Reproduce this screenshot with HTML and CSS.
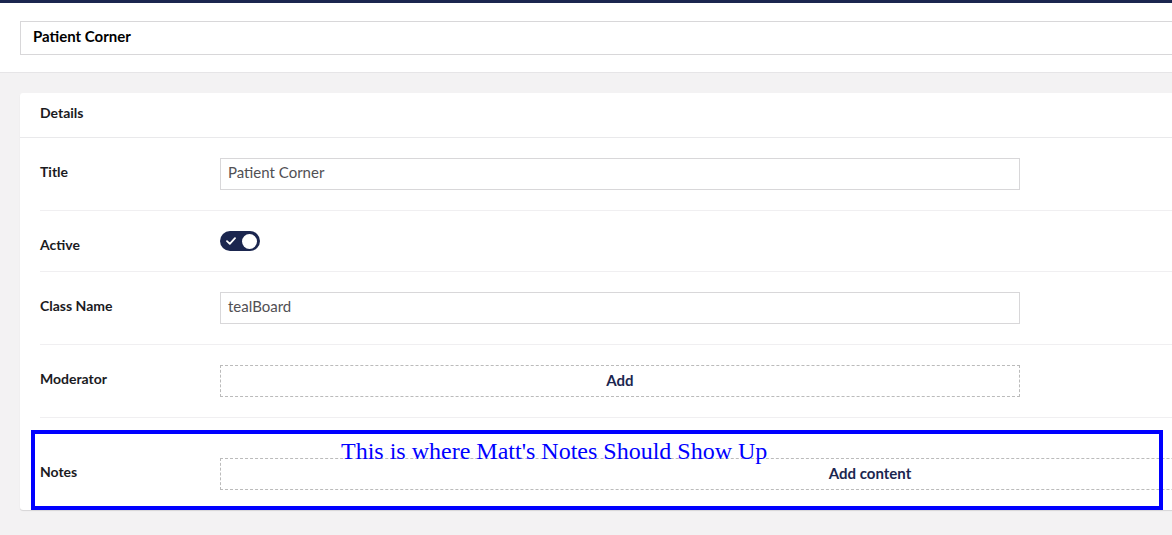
FILE: index.html
```html
<!DOCTYPE html>
<html>
<head>
<meta charset="utf-8">
<link rel="stylesheet" href="styles.css">
</head>
<body>
<div class="topbar"></div>
<div class="header">
  <div class="name-field">Patient Corner</div>
</div>
<div class="main">
  <div class="card">
    <div class="card-head">Details</div>
    <div class="row">
      <div class="label">Title</div>
      <div class="control"><div class="input">Patient Corner</div></div>
    </div>
    <div class="row">
      <div class="label">Active</div>
      <div class="control">
        <div class="toggle">
          <svg class="check" width="10" height="8" viewBox="0 0 10 8"><path d="M1 4.2 L3.8 6.8 L9 1.2" fill="none" stroke="#fff" stroke-width="1.8" stroke-linecap="round" stroke-linejoin="round"/></svg>
          <span class="knob"></span>
        </div>
      </div>
    </div>
    <div class="row">
      <div class="label">Class Name</div>
      <div class="control"><div class="input">tealBoard</div></div>
    </div>
    <div class="row">
      <div class="label">Moderator</div>
      <div class="control"><div class="dashed add">Add</div></div>
    </div>
    <div class="row notes-row">
      <div class="label">Notes</div>
      <div class="control"><div class="dashed add-content">Add content</div></div>
      <div class="highlight">
        <span class="highlight-text">This is where Matt's Notes Should Show Up</span>
      </div>
    </div>
  </div>
</div>
</body>
</html>
```

FILE: styles.css
```css
html, body {
  margin: 0;
  padding: 0;
  overflow: hidden;
  height: 535px;
}
body {
  font-family: Lato, "Open Sans", sans-serif;
  color: #1b1b1f;
  background: #f3f2f3;
}
.topbar {
  height: 3px;
  background: #1b264f;
}
.header {
  background: #fff;
  height: 70px;
  box-sizing: border-box;
  padding: 18px 0 0 20px;
  border-bottom: 1px solid #e6e5e7;
}
.name-field {
  width: 1300px;
  height: 34px;
  box-sizing: border-box;
  border: 1px solid #d8d7d9;
  padding-left: 12px;
  font-size: 15px;
  font-weight: 700;
  line-height: 29px;
  color: #000;
}
.main {
  padding: 20px;
}
.card {
  width: 1300px;
  background: #fff;
  border-radius: 3px;
  box-shadow: 0 1px 1px rgba(0,0,0,0.12);
}
.card-head {
  height: 45px;
  box-sizing: border-box;
  border-bottom: 1px solid #e9e9eb;
  padding-left: 20px;
  font-size: 14px;
  font-weight: 700;
  line-height: 40px;
}
.row {
  margin: 0 20px;
  padding: 20px 0;
  display: flex;
  align-items: flex-start;
  border-bottom: 1px solid #f0eff1;
}
.notes-row {
  position: relative;
  padding-top: 40px;
  border-bottom: none;
}
.label {
  width: 180px;
  flex: none;
  font-size: 14px;
  font-weight: 700;
  line-height: 20px;
  margin-top: 4px;
  margin-bottom: -4px;
}
.control {
  flex: 1;
}
.input {
  width: 800px;
  height: 32px;
  box-sizing: border-box;
  border: 1px solid #d8d7d9;
  padding-left: 7px;
  font-size: 15px;
  line-height: 27px;
  color: #515054;
}
.toggle {
  width: 40px;
  height: 20px;
  border-radius: 10px;
  background: #1b264f;
  display: flex;
  align-items: center;
  justify-content: space-between;
  box-sizing: border-box;
  padding: 0 3px 0 6px;
}
.check {
  display: block;
}
.knob {
  width: 15px;
  height: 15px;
  border-radius: 50%;
  background: #fff;
}
.dashed {
  height: 32px;
  box-sizing: border-box;
  border: 1px dashed #bbbbbb;
  text-align: center;
  font-size: 15px;
  font-weight: 700;
  line-height: 28px;
  color: #1b264f;
}
.add {
  width: 800px;
}
.add-content {
  width: 1300px;
}
.highlight {
  position: absolute;
  left: -9px;
  top: 12px;
  width: 1132px;
  height: 80px;
  box-sizing: border-box;
  border: 4px solid #0000ff;
}
.highlight-text {
  position: absolute;
  left: 306px;
  top: 4px;
  font-family: "Liberation Serif", "Times New Roman", serif;
  font-size: 24px;
  color: #0000ff;
  white-space: nowrap;
}
```
